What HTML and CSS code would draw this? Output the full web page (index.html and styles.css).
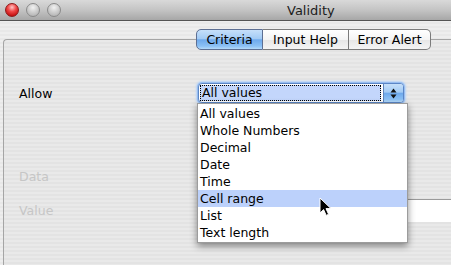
FILE: index.html
```html
<!DOCTYPE html>
<html lang="en">
<head>
  <meta charset="UTF-8">
  <title>Validity</title>
  <link rel="stylesheet" href="styles.css">
</head>
<body>
  <div class="window">
    <div class="titlebar">
      <div class="lights">
        <span class="light red"></span>
        <span class="light"></span>
        <span class="light"></span>
      </div>
      <div class="title">Validity</div>
    </div>

    <div class="content">
      <div class="tabs">
        <div class="tab tab-criteria active">Criteria</div>
        <div class="tab tab-help">Input Help</div>
        <div class="tab tab-error">Error Alert</div>
      </div>

      <div class="pane">
        <div class="row row-allow">
          <label class="label">Allow</label>
          <div class="select">
            <div class="select-value">All values</div>
            <div class="select-arrows">
              <svg width="7" height="11" viewBox="0 0 7 11">
                <path d="M3.5 0.5 L6.5 4.5 L0.5 4.5 Z" fill="#111"/>
                <path d="M0.5 6.5 L6.5 6.5 L3.5 10.5 Z" fill="#111"/>
              </svg>
            </div>
          </div>
        </div>
        <div class="row row-data">
          <label class="label disabled">Data</label>
        </div>
        <div class="row row-value">
          <label class="label disabled">Value</label>
          <div class="field"></div>
        </div>
      </div>
    </div>

    <ul class="popup">
      <li>All values</li>
      <li>Whole Numbers</li>
      <li>Decimal</li>
      <li>Date</li>
      <li>Time</li>
      <li class="hover">Cell range</li>
      <li>List</li>
      <li>Text length</li>
    </ul>

    <svg class="cursor" width="13" height="20" viewBox="0 0 13 20">
      <path d="M1 1 L1 16 L4.6 12.6 L7.2 18.4 L9.6 17.3 L7 11.6 L12 11.6 Z" fill="#000" stroke="#fff" stroke-width="1" stroke-linejoin="round"/>
    </svg>
  </div>
</body>
</html>
```

FILE: styles.css
```css
html, body {
  margin: 0;
  padding: 0;
}

body {
  font-family: "DejaVu Sans", "Liberation Sans", sans-serif;
  font-size: 12.5px;
  color: #000;
  width: 451px;
  height: 265px;
  overflow: hidden;
}

.window {
  position: relative;
  width: 451px;
  height: 265px;
  overflow: hidden;
  background: repeating-linear-gradient(#eeeeee 0, #eeeeee 2px, #e8e8e8 2px, #e8e8e8 4px);
}

/* barre de titre */
.titlebar {
  height: 20px;
  border-bottom: 1px solid #545454;
  background: linear-gradient(#d9d9d9, #c4c4c4 50%, #a7a7a7);
  display: flex;
  align-items: center;
}

.lights {
  display: flex;
  gap: 7px;
  padding-left: 5px;
  width: 282px;
}

.light {
  width: 12px;
  height: 12px;
  border-radius: 50%;
  border: 1px solid #8a8a8a;
  background: radial-gradient(circle at 50% 30%, #f2f2f2 0, #cfcfcf 45%, #a9a9a9 100%);
}

.light.red {
  border-color: #8c1a1a;
  background: radial-gradient(circle at 50% 28%, #ffc6c6 0, #f04848 40%, #c41010 80%, #b00000 100%);
}

.title {
  font-size: 13px;
  color: #1c1c1c;
  padding-top: 1px;
}

/* contenu */
.content {
  padding: 8px 0 0 3px;
}

.tabs {
  position: relative;
  z-index: 2;
  display: flex;
  margin-left: 193px;
  height: 21px;
}

.tab {
  box-sizing: border-box;
  height: 21px;
  line-height: 19px;
  text-align: center;
  border: 1px solid #7b7b7b;
  border-left: none;
  background: linear-gradient(#ffffff, #f4f4f4 50%, #e6e6e6 51%, #f4f4f4);
}

.tab-criteria {
  width: 67px;
  border-left: 1px solid #5d6f93;
  border-color: #5d6f93;
  border-radius: 5px 0 0 5px;
}

.tab-help {
  width: 86px;
}

.tab-error {
  width: 82px;
  border-radius: 0 5px 5px 0;
  border-right: 1px solid #7b7b7b;
}

.tab.active {
  background: linear-gradient(#c6e0fa, #a3cbf5 45%, #6ea9ec 52%, #8cc1f5 85%, #b5dbfb);
}

.pane {
  margin-top: -11px;
  height: 190px;
  border-top: 1px solid #a5a5a5;
  border-left: 1px solid #a5a5a5;
  border-top-left-radius: 4px;
  padding-top: 43px;
  background: repeating-linear-gradient(#e9e9e9 0, #e9e9e9 2px, #e3e3e3 2px, #e3e3e3 4px);
}

.row {
  display: flex;
  align-items: center;
}

.label {
  width: 178px;
  padding-left: 15px;
}

.label.disabled {
  color: #c6c6c6;
}

.row-allow {
  height: 20px;
}

.row-data {
  height: 20px;
  margin-top: 63px;
}

.row-value {
  height: 23px;
  margin-top: 13px;
}

/* liste deroulante */
.select {
  box-sizing: border-box;
  width: 206px;
  height: 20px;
  display: flex;
  border: 1px solid #5b86c6;
  border-radius: 4px;
  background: #fff;
  box-shadow: 0 0 0 1px #97bdf0, 0 0 2px 2px #b7d3f7;
  margin-left: 1px;
}

.select-value {
  flex: 1;
  box-sizing: border-box;
  margin: 1px 2px 1px 1px;
  line-height: 14px;
  padding-left: 1px;
  border: 1px dotted #000;
  background: #c3d6fb;
}

.select-arrows {
  width: 19px;
  display: flex;
  align-items: center;
  justify-content: center;
  border-left: 1px solid #5f85bd;
  border-radius: 0 3px 3px 0;
  background: linear-gradient(#c6e0fa, #a3cbf5 45%, #6ea9ec 52%, #8cc1f5 85%, #b5dbfb);
}

.field {
  flex: 1;
  height: 23px;
  box-sizing: border-box;
  border-top: 1px solid #9a9a9a;
  border-left: 1px solid #bdbdbd;
  background: #fff;
}

/* menu ouvert */
.popup {
  position: absolute;
  left: 197px;
  top: 103px;
  z-index: 5;
  width: 209px;
  margin: 0;
  padding: 1px 0 1px 0;
  list-style: none;
  background: #fff;
  border: 1px solid #9c9c9c;
  box-shadow: 0 3px 7px rgba(0, 0, 0, 0.45);
}

.popup li {
  height: 17px;
  line-height: 17px;
  padding-left: 2px;
}

.popup li.hover {
  background: #bcd1fb;
}

.cursor {
  position: absolute;
  left: 319px;
  top: 197px;
  z-index: 6;
}
```
